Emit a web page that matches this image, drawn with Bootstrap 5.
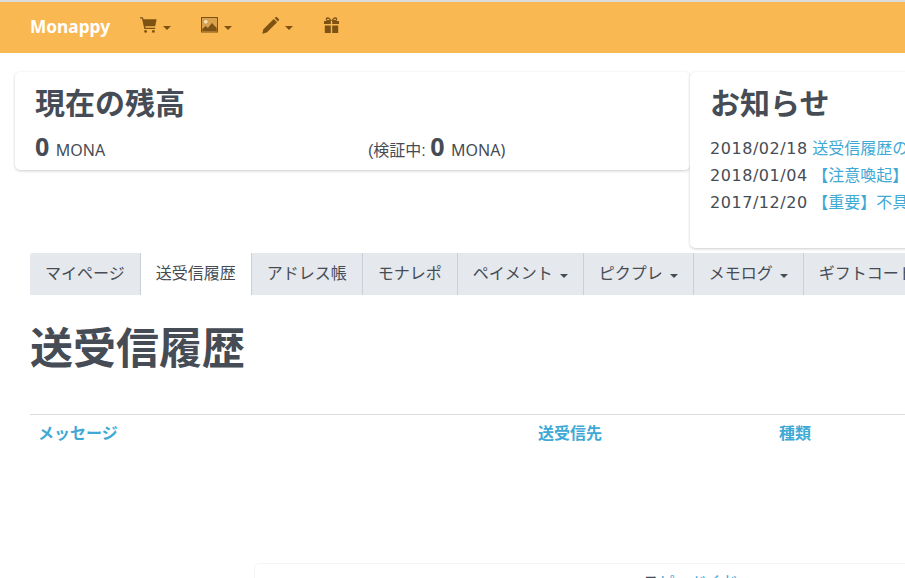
<!DOCTYPE html>
<html lang="ja">
<head>
<meta charset="utf-8">
<title>Monappy</title>
<link rel="stylesheet" href="https://cdn.jsdelivr.net/npm/bootstrap@5.3.0/dist/css/bootstrap.min.css">
<style>
html,body{height:578px;overflow:hidden}
body{font-family:"Liberation Sans","Noto Sans CJK JP",sans-serif;color:#464c55;background:#fff;font-size:16px}
.site-frame{width:1400px;border-top:2px solid #dcdcdc}
.top-bar{background:#f9b851;height:51px;padding:0 0 0 30px}
.top-brand{color:#fff;font-family:"Noto Sans","Noto Sans CJK JP",sans-serif;font-weight:700;font-size:17.3px;line-height:48px;height:50px;width:110px}
.top-item{color:#7d5213;display:flex;align-items:center;gap:6px;text-decoration:none;height:50px;width:61px;padding-bottom:5px}
.top-item svg{display:block}
.caret-mark{width:0;height:0;border-top:4px solid currentColor;border-left:4px solid transparent;border-right:4px solid transparent;margin-top:5px}
.board-row{padding:19px 0 0 15px;align-items:flex-start}
.panel-box{border:0;border-radius:5px;box-shadow:0 1px 3px rgba(0,0,0,.2),0 0 1px rgba(0,0,0,.04);background:#fff}
.panel-bal{width:675px;height:98px;padding:13px 20px 0}
.panel-news{width:700px;height:176px;padding:13px 20px 0}
.panel-title{font-size:30px;font-weight:700;line-height:38px;margin:0;color:#464c55}
.bal-line{margin-top:7px;font-size:16px;line-height:32px;height:32px;white-space:nowrap}
.bal-num{font-size:25px;font-weight:700;font-family:"Noto Sans",sans-serif;margin-right:2px}
.bal-unit{font-family:"Noto Sans",sans-serif;font-size:16px}
.bal-second{width:333px;flex:none}
.news-list{margin-top:12px;font-size:16px;line-height:27px;white-space:nowrap}
.news-date{font-family:"DejaVu Sans",sans-serif;letter-spacing:.55px}
.news-list a,.head-link{color:#3fa9d5;text-decoration:none}
.tab-strip{margin:5px 0 0 30px;height:42px;background:#e5e8ec;width:1300px;flex-wrap:nowrap;border-radius:3px 0 0 0;overflow:hidden}
.tab-strip .nav-link{color:#464c55;height:42px;padding:0 15px;font-size:16px;border-right:1px solid #ccd0d6;border-radius:0;white-space:nowrap;display:flex;align-items:center;gap:7px}
.tab-strip .nav-link.active{background:#fff;color:#464c55}
.tab-strip .caret-mark{color:#464c55;margin:3px 0 0 0}
.page-head{margin:27px 0 0 30px;font-size:43px;font-weight:700;line-height:54px;color:#464c55}
.list-table{width:1300px;margin:38px 0 0 30px;table-layout:fixed;border-top:1px solid #ddd}
.list-table th{border:0;padding:9px 8px;font-size:16px;line-height:20px;font-weight:700;background:transparent}
.col-msg{width:500px}.col-peer{width:241px}
.foot-box{margin:110px 0 0 254px;width:1100px;height:60px;border:1px solid #f4f4f4;border-radius:5px 0 0 0;padding:10px 0 0 388px;font-size:16px;line-height:18px;white-space:nowrap}
.foot-box a{color:#3fa9d5;text-decoration:none}
</style>
</head>
<body>
<div class="site-frame">
  <nav class="top-bar d-flex align-items-center">
    <a class="top-brand text-decoration-none" href="#">Monappy</a>
    <a class="top-item" href="#" aria-label="ショップ">
      <svg width="17" height="16" viewBox="0 0 17 16" fill="currentColor"><path d="M0 .2h2.900l.6 2.100H16.600l-1.400 7H5.200l.3 1.500h9.700v1.300H4.300L2 1.500H0z"/><circle cx="5.600" cy="14.400" r="1.400"/><circle cx="13.400" cy="14.400" r="1.400"/></svg>
      <span class="caret-mark"></span>
    </a>
    <a class="top-item" href="#" aria-label="ピクプレ">
      <svg width="17" height="16" viewBox="0 0 17 16"><path fill="currentColor" fill-rule="evenodd" d="M0 0h17v15.500H0zM1.300 1.300v12.900h14.400V1.300z"/><rect x="1" y="1" width="15" height="13.500" fill="#d9a14d"/><circle cx="4.800" cy="4.800" r="1.800" fill="#f9e6c0"/><path fill="currentColor" d="M1.300 14.200v-2.200l3.400-3 2.200 1.900 4-5 4.800 5v3.300z"/></svg>
      <span class="caret-mark"></span>
    </a>
    <a class="top-item" href="#" aria-label="メモログ">
      <svg width="17" height="17" viewBox="0 0 17 17" fill="currentColor"><path d="M.3 16.700l1.100-4.500L11.700 1.900l3.400 3.400L4.800 15.600zM12.600 1l1-.8a1 1 0 0 1 1.300 0l1.900 1.900a1 1 0 0 1 0 1.300l-.9 1z"/></svg>
      <span class="caret-mark"></span>
    </a>
    <a class="top-item" href="#" aria-label="ギフト">
      <svg width="17" height="17" viewBox="0 0 17 17" fill="currentColor"><path fill-rule="evenodd" d="M1 4h6.800v3H1zM9.200 4H16v3H9.200zM1.800 8.500h6v7.500h-6zM9.200 8.500h6v7.500h-6zM8.500 4C7.500 1 5.800 0 4.300.3 2.400.7 2.200 3 3.800 4zM8.500 4C9.500 1 11.200 0 12.700.3c1.900.4 2.100 2.700.5 3.700zM4.700 1.700c-.9 0-1 .9-.3 1.300h2.300C6.200 2.200 5.500 1.700 4.700 1.700zM12.300 1.700c.9 0 1 .9.300 1.300h-2.300c.5-.8 1.200-1.300 2-1.300z"/></svg>
    </a>
  </nav>

  <div class="board-row d-flex">
    <section class="panel-box panel-bal card">
      <h2 class="panel-title">現在の残高</h2>
      <div class="bal-line d-flex">
        <div class="bal-second"><span class="bal-num">0</span> <span class="bal-unit">MONA</span></div>
        <div>(検証中: <span class="bal-num">0</span> <span class="bal-unit">MONA)</span></div>
      </div>
    </section>
    <section class="panel-box panel-news card">
      <h2 class="panel-title">お知らせ</h2>
      <div class="news-list">
        <div><span class="news-date">2018/02/18</span> <a href="#">送受信履歴の表示について</a></div>
        <div><span class="news-date">2018/01/04</span> <a href="#">【注意喚起】不審なメールにご注意ください</a></div>
        <div><span class="news-date">2017/12/20</span> <a href="#">【重要】不具合のお知らせ</a></div>
      </div>
    </section>
  </div>

  <ul class="nav tab-strip">
    <li class="nav-item"><a class="nav-link" href="#">マイページ</a></li>
    <li class="nav-item"><a class="nav-link active" href="#">送受信履歴</a></li>
    <li class="nav-item"><a class="nav-link" href="#">アドレス帳</a></li>
    <li class="nav-item"><a class="nav-link" href="#">モナレポ</a></li>
    <li class="nav-item"><a class="nav-link" href="#">ペイメント <span class="caret-mark"></span></a></li>
    <li class="nav-item"><a class="nav-link" href="#">ピクプレ <span class="caret-mark"></span></a></li>
    <li class="nav-item"><a class="nav-link" href="#">メモログ <span class="caret-mark"></span></a></li>
    <li class="nav-item"><a class="nav-link" href="#">ギフトコード</a></li>
  </ul>

  <h1 class="page-head">送受信履歴</h1>

  <table class="table list-table">
    <thead>
      <tr>
        <th class="col-msg"><a class="head-link" href="#">メッセージ</a></th>
        <th class="col-peer"><a class="head-link" href="#">送受信先</a></th>
        <th><a class="head-link" href="#">種類</a></th>
      </tr>
    </thead>
  </table>

  <div class="foot-box">ス<a href="#">ピードくじ</a></div>
</div>
<script src="https://cdn.jsdelivr.net/npm/bootstrap@5.3.0/dist/js/bootstrap.bundle.min.js"></script>
</body>
</html>
